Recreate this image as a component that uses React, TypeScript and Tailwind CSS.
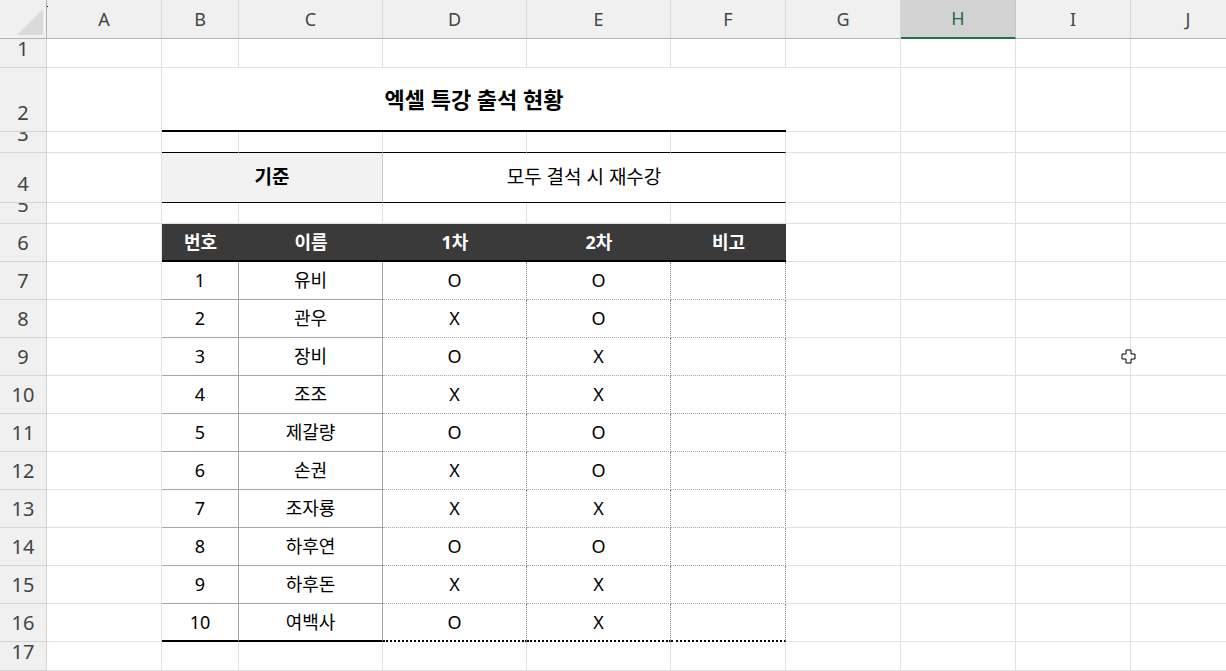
import React from 'react';

const cols = ['A', 'B', 'C', 'D', 'E', 'F', 'G', 'H', 'I', 'J'];
const rowH = [29, 64, 21, 50, 21, 38, 38, 38, 38, 38, 38, 38, 38, 38, 38, 38, 29];

const data: [string, string, string, string][] = [
  ['1', '유비', 'O', 'O'],
  ['2', '관우', 'X', 'O'],
  ['3', '장비', 'O', 'X'],
  ['4', '조조', 'X', 'X'],
  ['5', '제갈량', 'O', 'O'],
  ['6', '손권', 'X', 'O'],
  ['7', '조자룡', 'X', 'X'],
  ['8', '하후연', 'O', 'O'],
  ['9', '하후돈', 'X', 'X'],
  ['10', '여백사', 'O', 'X'],
];

const font = { fontFamily: '"Noto Sans", "Noto Sans CJK KR", sans-serif' };

function Empty({ cls = '' }: { cls?: string }) {
  return <div className={`border-r border-b border-[#e1e1e1] ${cls}`} />;
}

function RowHead({ n }: { n: number }) {
  return (
    <div className="bg-[#f0f0f0] border-r border-b border-[#d4d4d4] text-[#444] text-[20px] flex items-end justify-center leading-[36px] overflow-hidden">
      {n}
    </div>
  );
}

function Tail() {
  return (
    <>
      <Empty />
      <Empty />
      <Empty />
      <Empty />
    </>
  );
}

export default function App() {
  return (
    <div className="w-[1226px] h-[671px] overflow-hidden bg-white relative" style={font}>
      <div
        className="grid"
        style={{
          gridTemplateColumns: '47px 115px 77px 144px 144px 144px 115px 115px 115px 115px 115px',
          gridTemplateRows: `39px ${rowH.map((h) => h + 'px').join(' ')}`,
        }}
      >
        {/* column headers */}
        <div className="bg-[#f0f0f0] border-r border-b border-[#b5b5b5] relative">
          <div className="absolute right-[3px] bottom-[3px] w-0 h-0 border-l-[26px] border-l-transparent border-b-[26px] border-b-[#dadada]" />
        </div>
        {cols.map((c) =>
          c === 'H' ? (
            <div key={c} className="bg-[#d2d2d2] border-r border-[#c6c6c6] border-b-2 border-b-[#217346] text-[#1e6b40] text-[18px] flex items-center justify-center">
              {c}
            </div>
          ) : (
            <div key={c} className="bg-[#f0f0f0] border-r border-b border-r-[#d9d9d9] border-b-[#b5b5b5] text-[#444] text-[18px] flex items-center justify-center">
              {c}
            </div>
          )
        )}

        {/* row 1 */}
        <RowHead n={1} />
        <Empty /><Empty /><Empty /><Empty /><Empty /><Empty />
        <Tail />

        {/* row 2 */}
        <RowHead n={2} />
        <Empty />
        <div className="col-span-5 border-b-2 border-black flex items-center justify-center text-[22px] font-bold text-black">
          엑셀 특강 출석 현황
        </div>
        <Tail />

        {/* row 3 */}
        <RowHead n={3} />
        <Empty />
        <Empty cls="border-b-black" />
        <Empty cls="border-b-black" />
        <Empty cls="border-b-black" />
        <Empty cls="border-b-black" />
        <Empty cls="border-b-black" />
        <Tail />

        {/* row 4 */}
        <RowHead n={4} />
        <Empty />
        <div className="col-span-2 bg-[#f2f2f2] border-r border-r-[#c8c8c8] border-b border-black flex items-center justify-center text-[19px] font-bold">
          기준
        </div>
        <div className="col-span-3 border-b border-black border-r border-r-[#e1e1e1] flex items-center justify-center text-[19px]">
          모두 결석 시 재수강
        </div>
        <Tail />

        {/* row 5 */}
        <RowHead n={5} />
        <Empty /><Empty /><Empty /><Empty /><Empty /><Empty />
        <Tail />

        {/* row 6 */}
        <RowHead n={6} />
        <Empty />
        {['번호', '이름', '1차', '2차', '비고'].map((t) => (
          <div key={t} className="bg-[#3a3a3a] border-b-2 border-black text-white font-bold text-[18px] flex items-center justify-center">
            {t}
          </div>
        ))}
        <Tail />

        {data.map((r, i) => {
          const last = i === data.length - 1;
          const bb = last ? 'border-b-2 border-b-black' : 'border-b border-b-[#a6a6a6]';
          return (
            <React.Fragment key={r[0]}>
              <RowHead n={7 + i} />
              <Empty />
              <div className={`border-r border-r-[#a6a6a6] ${bb} flex items-center justify-center text-[18px]`}>{r[0]}</div>
              <div className={`border-r border-r-[#a6a6a6] ${bb} flex items-center justify-center text-[18px]`}>{r[1]}</div>
              <div className={`border-r border-dotted border-r-[#8c8c8c] ${bb} flex items-center justify-center text-[18px]`}>{r[2]}</div>
              <div className={`border-r border-dotted border-r-[#8c8c8c] ${bb} flex items-center justify-center text-[18px]`}>{r[3]}</div>
              <div className={`border-r border-dotted border-r-[#8c8c8c] ${bb}`} />
              <Tail />
            </React.Fragment>
          );
        })}

        {/* row 17 */}
        <RowHead n={17} />
        <Empty /><Empty /><Empty /><Empty /><Empty /><Empty />
        <Tail />
      </div>

      <svg className="absolute left-[1121px] top-[349px]" width="15" height="15" viewBox="0 0 15 15">
        <path d="M5 1h5v4h4v5h-4v4H5v-4H1V5h4z" fill="white" stroke="black" strokeWidth="1" />
      </svg>
      <div className="absolute left-[47px] top-[6px] w-px h-px bg-black" />
    </div>
  );
}
